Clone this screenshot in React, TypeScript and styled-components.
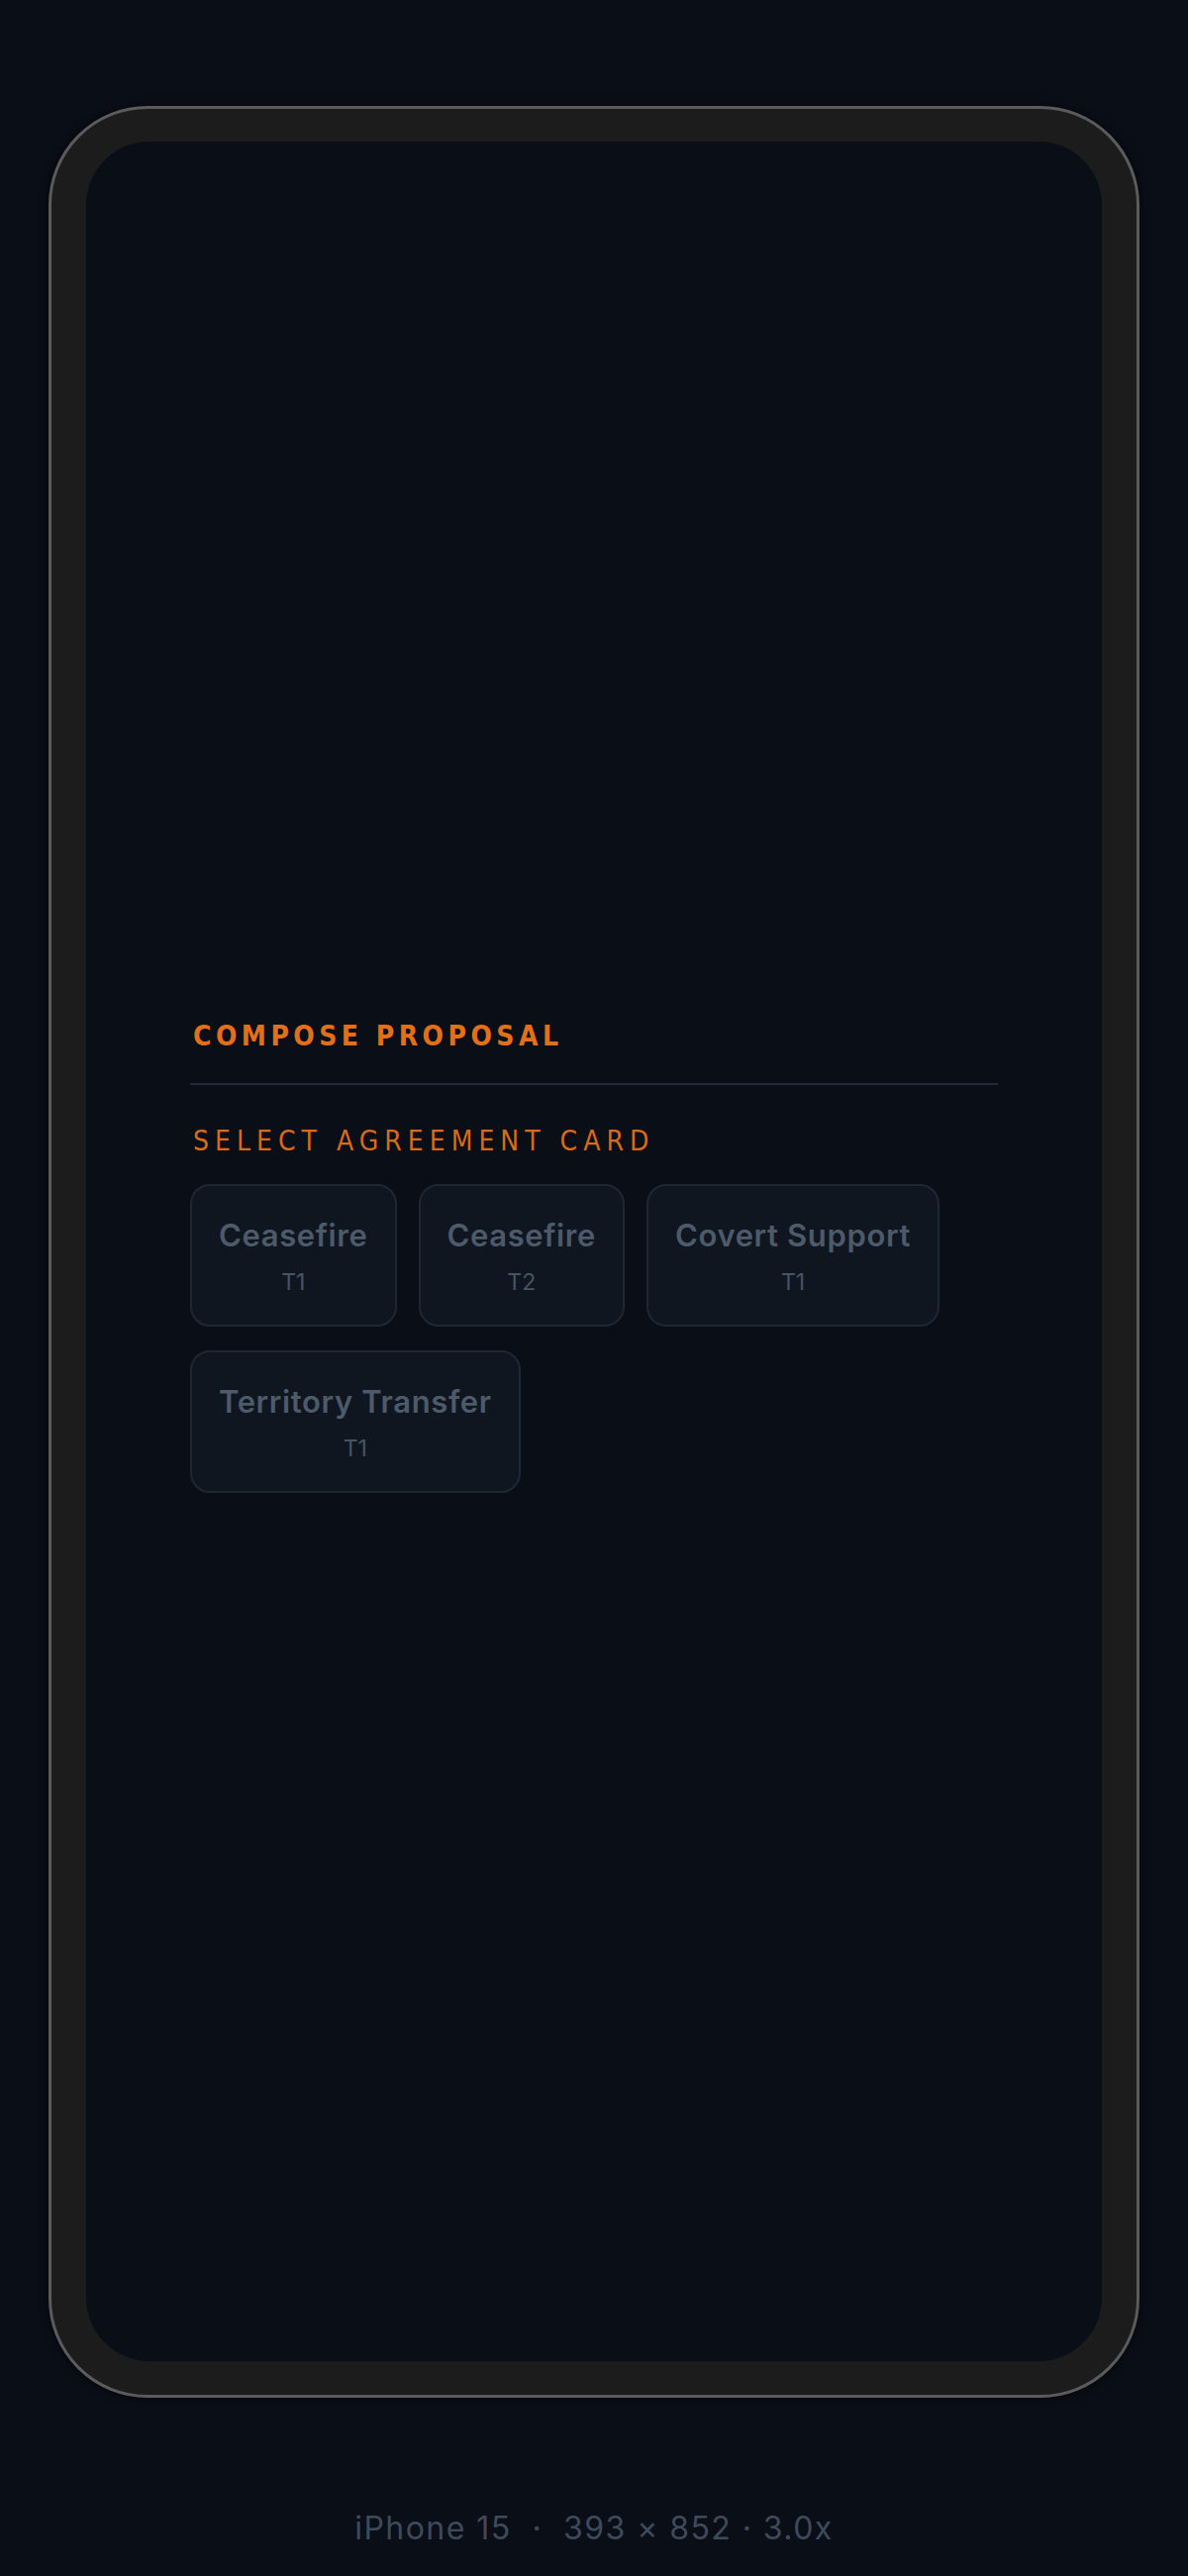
import React from "react";
import styled, { createGlobalStyle } from "styled-components";

const GlobalStyle = createGlobalStyle`
  html, body {
    margin: 0;
    padding: 0;
    background: #0a0e17;
  }
  * {
    box-sizing: border-box;
  }
`;

const Page = styled("div")`
  min-height: 2602px;
  display: flex;
  flex-direction: column;
  align-items: center;
  padding-top: 107px;
  background: #0a0e17;
  font-family: Inter, "Liberation Sans", sans-serif;
`;

const PhoneFrame = styled("div")`
  width: 1102px;
  height: 2315px;
  display: flex;
  padding: 33px 35px 34px;
  border: 3px solid #5b5b5b;
  border-radius: 100px;
  background: #1c1c1c;
  box-shadow: 0 0 10px rgba(0, 0, 0, 0.7);
`;

const Screen = styled("div")`
  flex: 1;
  display: flex;
  flex-direction: column;
  justify-content: center;
  padding: 8px 105px 0;
  border-radius: 64px;
  background: #0a0e17;
  overflow: hidden;
`;

const Heading = styled("h2")`
  margin: 0;
  padding-left: 3px;
  font-family: "DejaVu Sans Condensed", "Liberation Sans Narrow", Roboto, sans-serif;
  font-stretch: condensed;
  font-size: 28px;
  font-weight: 700;
  line-height: 36px;
  letter-spacing: 0.16em;
  color: #e2701a;
`;

const Divider = styled("div")`
  height: 2px;
  margin: 29px 0 40px;
  background: #1e2934;
`;

const SectionLabel = styled("div")`
  padding-left: 3px;
  font-family: "DejaVu Sans Condensed", "Liberation Sans Narrow", Roboto, sans-serif;
  font-stretch: condensed;
  font-size: 28px;
  font-weight: 400;
  line-height: 34px;
  letter-spacing: 0.215em;
  color: #d96a17;
`;

const CardGrid = styled("div")`
  display: flex;
  flex-wrap: wrap;
  gap: 24px 22px;
  margin-top: 26px;
`;

const AgreementCard = styled("button")`
  display: flex;
  flex-direction: column;
  align-items: center;
  gap: 14px;
  height: 144px;
  padding: 31px 27px 0;
  border: 2px solid #1e2834;
  border-radius: 20px;
  background: #0f1620;
  font-family: Inter, "Liberation Sans", sans-serif;
  cursor: pointer;
`;

const CardTitle = styled("span")`
  font-size: 31px;
  font-weight: 600;
  line-height: 38px;
  letter-spacing: 0.02em;
  color: #4c5a6a;
  white-space: nowrap;
`;

const CardTier = styled("span")`
  font-size: 23px;
  font-weight: 400;
  line-height: 28px;
  color: #475464;
`;

const DeviceLabel = styled("div")`
  margin-top: 112px;
  font-family: Inter, "Liberation Sans", sans-serif;
  font-size: 32px;
  line-height: 40px;
  letter-spacing: 0.045em;
  color: #3e4a59;
  white-space: pre;
`;

const cards = [
  { name: "Ceasefire", tier: "T1" },
  { name: "Ceasefire", tier: "T2" },
  { name: "Covert Support", tier: "T1" },
  { name: "Territory Transfer", tier: "T1" },
];

const App = () => {
  return (
    <>
      <GlobalStyle />
      <Page>
        <PhoneFrame>
          <Screen>
            <Heading>COMPOSE PROPOSAL</Heading>
            <Divider />
            <SectionLabel>SELECT AGREEMENT CARD</SectionLabel>
            <CardGrid>
              {cards.map((card, i) => (
                <AgreementCard key={i}>
                  <CardTitle>{card.name}</CardTitle>
                  <CardTier>{card.tier}</CardTier>
                </AgreementCard>
              ))}
            </CardGrid>
          </Screen>
        </PhoneFrame>
        <DeviceLabel>{"iPhone 15  ·  393 × 852 · 3.0x"}</DeviceLabel>
      </Page>
    </>
  );
};

export default App;
